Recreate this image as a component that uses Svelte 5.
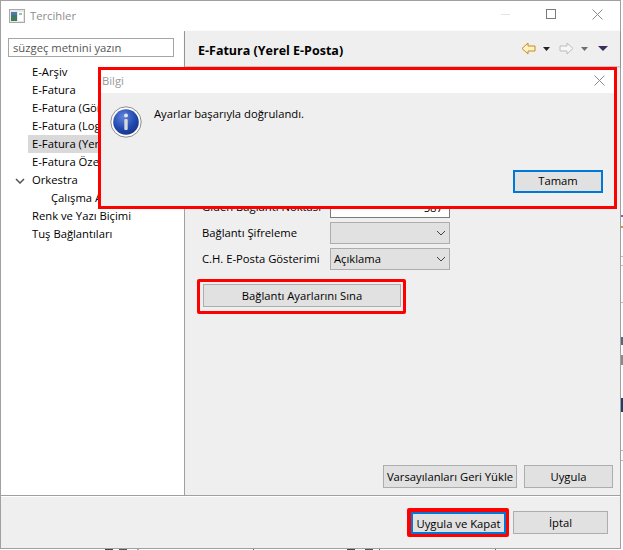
<script lang="ts">
  const tree = [
    { label: 'E-Arşiv' },
    { label: 'E-Fatura' },
    { label: 'E-Fatura (Gönderim)' },
    { label: 'E-Fatura (Loglama)' },
    { label: 'E-Fatura (Yerel E-Posta)', selected: true },
    { label: 'E-Fatura Özellikleri' },
    { label: 'Orkestra', open: true },
    { label: 'Çalışma Alanı', child: true },
    { label: 'Renk ve Yazı Biçimi' },
    { label: 'Tuş Bağlantıları' }
  ];

  // bits of the app behind the window that stick out on the right and bottom edges
  const behind = [
    { x: 621, y: 215, w: 2, h: 2, c: '#8a5ca8' },
    { x: 621, y: 226, w: 2, h: 2, c: '#e09040' },
    { x: 621, y: 256, w: 2, h: 1, c: '#bbb' },
    { x: 621, y: 265, w: 2, h: 1, c: '#bbb' },
    { x: 621, y: 302, w: 2, h: 1, c: '#bbb' },
    { x: 621, y: 337, w: 2, h: 8, c: '#56697c' },
    { x: 621, y: 355, w: 2, h: 10, c: '#8a8a8a' },
    { x: 621, y: 398, w: 2, h: 14, c: '#1d3f66' },
    { x: 621, y: 450, w: 2, h: 1, c: '#bbb' },
    { x: 621, y: 460, w: 2, h: 1, c: '#bbb' },
    { x: 105, y: 549, w: 8, h: 1, c: '#444' },
    { x: 119, y: 549, w: 8, h: 1, c: '#555' },
    { x: 137, y: 549, w: 2, h: 1, c: '#c8a070' },
    { x: 253, y: 549, w: 1, h: 1, c: '#666' },
    { x: 347, y: 549, w: 8, h: 1, c: '#444' },
    { x: 365, y: 549, w: 8, h: 1, c: '#555' },
    { x: 379, y: 549, w: 1, h: 1, c: '#38708c' },
    { x: 495, y: 549, w: 1, h: 1, c: '#666' }
  ];
</script>

<div class="window">
  <header class="titlebar">
    <svg class="appicon" width="16" height="16" viewBox="0 0 16 16">
      <rect x="0.5" y="1.5" width="15" height="13" fill="#e8e8e8" stroke="#a9a9a9" />
      <rect x="2" y="4" width="6" height="9" fill="#3f7a5c" />
      <rect x="2" y="4" width="6" height="3" fill="#4a78b0" />
      <rect x="9" y="4" width="5" height="9" fill="#fff" />
      <rect x="10" y="5" width="3" height="2" fill="#9fc0a8" />
    </svg>
    <span class="wintitle">Tercihler</span>
    <div class="winbtns">
      <svg width="11" height="11" viewBox="0 0 11 11"><path d="M1 5.500h9" stroke="#e4e4e4" /></svg>
      <svg width="11" height="11" viewBox="0 0 11 11"><rect x="0.500" y="0.500" width="9" height="9" fill="none" stroke="#7a7a7a" /></svg>
      <svg width="11" height="11" viewBox="0 0 11 11"><path d="M0.500 0.500l10 10M10.500 0.500l-10 10" stroke="#8a8a8a" /></svg>
    </div>
  </header>

  <div class="main">
    <aside class="sidebar">
      <div class="filter">süzgeç metnini yazın</div>
      <ul class="tree">
        {#each tree as item}
          <li class:selected={item.selected} class:child={item.child}>
            {#if item.open}
              <svg class="chevron" width="10" height="6" viewBox="0 0 10 6"><path d="M1 1l4 4 4-4" fill="none" stroke="#555" stroke-width="1.5" /></svg>
            {/if}
            <span>{item.label}</span>
          </li>
        {/each}
      </ul>
    </aside>

    <section class="content">
      <div class="pagehead">
        <h1>E-Fatura (Yerel E-Posta)</h1>
        <div class="navicons">
          <svg width="15" height="13" viewBox="0 0 15 13"><path d="M7 1L1 6.500 7 12V9h7V4H7z" fill="#fff2c4" stroke="#c98a1e" /></svg>
          <svg class="caret" width="7" height="4" viewBox="0 0 7 4"><path d="M0 0h7L3.500 4z" fill="#222" /></svg>
          <svg class="fwd" width="15" height="13" viewBox="0 0 15 13"><path d="M8 1l6 5.500L8 12V9H1V4h7z" fill="#f6f6f6" stroke="#bdbdbd" /></svg>
          <svg class="caret" width="7" height="4" viewBox="0 0 7 4"><path d="M0 0h7L3.500 4z" fill="#6e6e6e" /></svg>
          <svg class="menu" width="10" height="5" viewBox="0 0 10 5"><path d="M0 0h10L5 5z" fill="#3f2a63" /></svg>
        </div>
      </div>

      <div class="form">
        <div class="row">
          <span class="lbl">Giden Bağlantı Noktası</span>
          <div class="input">587</div>
        </div>
        <div class="row">
          <span class="lbl">Bağlantı Şifreleme</span>
          <div class="select">
            <span></span>
            <svg width="10" height="6" viewBox="0 0 10 6"><path d="M1 1l4 4 4-4" fill="none" stroke="#444" /></svg>
          </div>
        </div>
        <div class="row">
          <span class="lbl">C.H. E-Posta Gösterimi</span>
          <div class="select">
            <span>Açıklama</span>
            <svg width="10" height="6" viewBox="0 0 10 6"><path d="M1 1l4 4 4-4" fill="none" stroke="#444" /></svg>
          </div>
        </div>
        <div class="redbox testbox">
          <button class="btn test">Bağlantı Ayarlarını Sına</button>
        </div>
      </div>

      <div class="pagebtns">
        <button class="btn defaults">Varsayılanları Geri Yükle</button>
        <button class="btn apply">Uygula</button>
      </div>
    </section>
  </div>

  <footer class="footer">
    <div class="redbox closebox">
      <button class="btn primary">Uygula ve Kapat</button>
    </div>
    <button class="btn cancel">İptal</button>
  </footer>
</div>

{#each behind as b}
  <span class="behind" style="left:{b.x}px;top:{b.y}px;width:{b.w}px;height:{b.h}px;background:{b.c}"></span>
{/each}

<div class="dialog">
  <div class="dlgtitle">
    <span>Bilgi</span>
    <svg width="11" height="11" viewBox="0 0 11 11"><path d="M0.500 0.500l10 10M10.500 0.500l-10 10" stroke="#8a8a8a" /></svg>
  </div>
  <div class="dlgbody">
    <div class="dlgmsg">
      <svg width="32" height="32" viewBox="0 0 32 32">
        <defs>
          <radialGradient id="ball" cx="0.4" cy="0.3" r="0.8">
            <stop offset="0" stop-color="#5f86dc" />
            <stop offset="0.6" stop-color="#2047ad" />
            <stop offset="1" stop-color="#16307f" />
          </radialGradient>
        </defs>
        <circle cx="16" cy="16" r="15.200" fill="#fff" stroke="#8d8d8d" />
        <circle cx="16" cy="16" r="12.800" fill="url(#ball)" />
        <circle cx="16" cy="9.500" r="2" fill="#e6e6e6" />
        <rect x="14.300" y="13" width="3.400" height="11" rx="1" fill="#d8d8d8" />
      </svg>
      <span>Ayarlar başarıyla doğrulandı.</span>
    </div>
    <div class="dlgactions">
      <button class="btn ok">Tamam</button>
    </div>
  </div>
</div>

<style>
  :global(body) {
    background: #fff;
    font-family: "Open Sans", "Noto Sans", sans-serif;
    font-size: 11.25px;
    color: #000;
    overflow: hidden;
  }

  .window {
    width: 621px;
    height: 549px;
    box-sizing: border-box;
    border: 1px solid #a0a0a0;
    display: flex;
    flex-direction: column;
    background: #efefef;
  }

  .behind {
    position: absolute;
  }

  .titlebar {
    height: 30px;
    flex: none;
    background: #fff;
    display: flex;
    align-items: center;
    padding: 0 0 1px 8px;
    box-sizing: border-box;
  }
  .wintitle {
    margin-left: 5px;
    color: #8c8c8c;
  }
  .winbtns {
    margin-left: auto;
    display: flex;
    gap: 35px;
    padding: 0 17px 2px 0;
  }

  .main {
    height: 465px;
    flex: none;
    display: flex;
    border-bottom: 1px solid #a0a0a0;
    box-sizing: border-box;
  }

  .sidebar {
    width: 184px;
    flex: none;
    box-sizing: border-box;
    background: #fff;
    border-right: 1px solid #a0a0a0;
    padding: 7px 0 0 7px;
  }
  .filter {
    width: 166px;
    height: 19px;
    line-height: 17px;
    box-sizing: border-box;
    border: 1px solid #a5a5a5;
    padding-left: 4px;
    color: #555;
    margin-bottom: 6px;
  }
  .tree {
    list-style: none;
    margin: 0;
    padding: 0 0 0 20px;
  }
  .tree li {
    height: 18px;
    line-height: 18px;
    position: relative;
    white-space: nowrap;
    padding-left: 4px;
  }
  .tree li.child {
    padding-left: 23px;
  }
  .tree li.selected {
    background: #d9d9d9;
  }
  .chevron {
    position: absolute;
    left: -13px;
    top: 7px;
  }

  .content {
    flex: 1;
    min-width: 0;
    display: flex;
    flex-direction: column;
  }
  .pagehead {
    height: 35px;
    flex: none;
    display: flex;
    align-items: center;
    padding: 0 12px 0 13px;
    box-shadow: 0 1px 2px rgba(0, 0, 0, 0.25);
  }
  h1 {
    margin: 3px 0 0;
    font-size: 12.5px;
    font-weight: 700;
  }
  .navicons {
    margin-left: auto;
    display: flex;
    align-items: center;
    gap: 7px;
  }
  .navicons .fwd {
    margin-left: 2px;
  }
  .navicons .menu {
    margin-left: 3px;
  }

  .form {
    padding: 128px 0 0 17px;
    flex: 1;
  }
  .row {
    display: flex;
    align-items: center;
    gap: 8px;
    height: 26px;
  }
  .lbl {
    width: 120px;
    white-space: nowrap;
    padding-bottom: 2px;
  }
  .input,
  .select {
    width: 120px;
    height: 22px;
    box-sizing: border-box;
    display: flex;
    align-items: center;
    padding: 0 6px 0 3px;
  }
  .input {
    background: #fff;
    border: 1px solid #7a7a7a;
    justify-content: flex-end;
  }
  .select {
    background: #e1e1e1;
    border: 1px solid #adadad;
    justify-content: space-between;
    padding-right: 3px;
  }
  .select span {
    padding-bottom: 2px;
  }

  .btn {
    font: inherit;
    color: #000;
    background: #e1e1e1;
    border: 1px solid #adadad;
    padding: 0;
    height: 23px;
    white-space: nowrap;
  }
  .redbox {
    border: 3px solid #f00;
    border-radius: 2px;
    box-sizing: border-box;
    width: fit-content;
  }
  .testbox {
    margin: 7px 0 0 -5px;
    padding: 2px 2px 4px 3px;
  }
  .test {
    width: 198px;
    display: block;
  }

  .pagebtns {
    flex: none;
    display: flex;
    justify-content: flex-end;
    gap: 7px;
    padding: 0 7px 7px 0;
  }
  .defaults {
    width: 134px;
  }
  .apply {
    width: 89px;
  }

  .footer {
    flex: 1;
    display: flex;
    align-items: center;
    justify-content: flex-end;
    gap: 4px;
    padding-right: 12px;
    border-top: 1px solid #fff;
  }
  .closebox {
    padding: 1px 0 0 1px;
    background: #f00;
  }
  .primary {
    display: block;
    width: 95px;
    height: 22px;
    border: 2px solid #0078d7;
  }
  .cancel {
    width: 95px;
  }

  /* floats over the preferences window, red frame is the screenshot's annotation */
  .dialog {
    position: absolute;
    left: 98px;
    top: 67px;
    width: 519px;
    height: 142px;
    box-sizing: border-box;
    border: 3px solid #f00;
    display: flex;
    flex-direction: column;
    background: #efefef;
  }
  .dlgtitle {
    height: 23px;
    flex: none;
    box-sizing: border-box;
    background: #fff;
    display: flex;
    align-items: center;
    justify-content: space-between;
    padding: 0 9px 3px 1px;
    color: #9a9a9a;
  }
  .dlgbody {
    flex: 1;
    display: flex;
    flex-direction: column;
    padding: 13px 11px 13px 9px;
  }
  .dlgmsg {
    display: flex;
    align-items: flex-start;
    gap: 12px;
  }
  .dlgactions {
    margin-top: auto;
    display: flex;
    justify-content: flex-end;
  }
  .ok {
    width: 90px;
    border: 2px solid #0078d7;
    padding-bottom: 2px;
  }
</style>
